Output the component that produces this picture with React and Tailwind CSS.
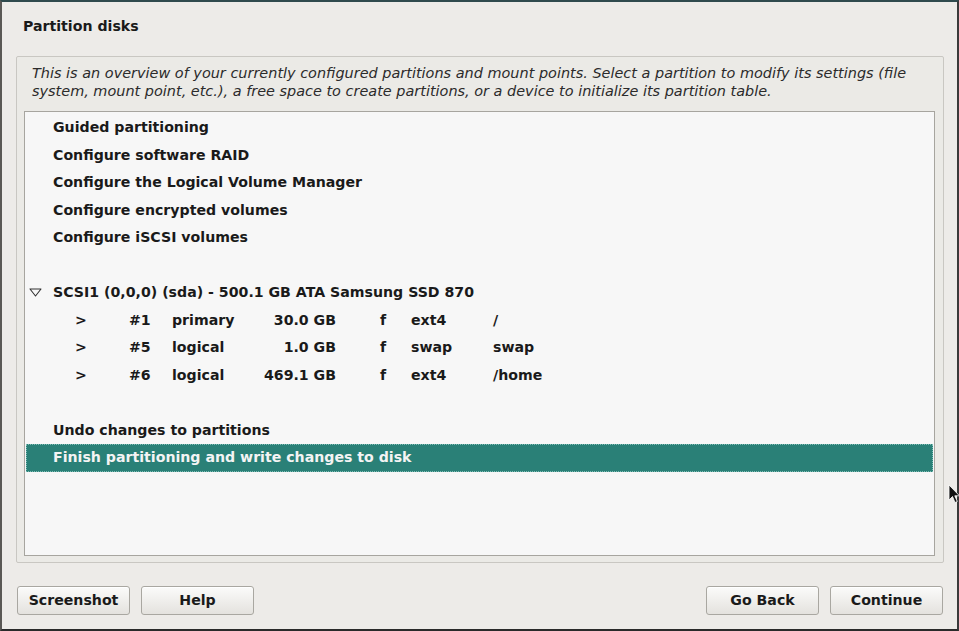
import React from "react";

const menuTop = [
  "Guided partitioning",
  "Configure software RAID",
  "Configure the Logical Volume Manager",
  "Configure encrypted volumes",
  "Configure iSCSI volumes",
];

const partitions = [
  { num: "#1", type: "primary", size: "30.0 GB", fs: "ext4", mount: "/" },
  { num: "#5", type: "logical", size: "1.0 GB", fs: "swap", mount: "swap" },
  { num: "#6", type: "logical", size: "469.1 GB", fs: "ext4", mount: "/home" },
];

const Row = ({ children, selected }) => (
  <div
    className={
      selected
        ? "flex h-[27.5px] items-center border border-dotted border-[#7fbdb5] bg-[#2a8077] pl-[26px] text-[#f4f4f4]"
        : "flex h-[27.5px] items-center border border-transparent pl-[26px] text-[#1a1a1a]"
    }
  >
    {children}
  </div>
);

const Button = ({ label, className }) => (
  <button
    className={
      "flex h-[29px] w-[113px] items-center justify-center rounded-[3px] border border-[#a9a7a1] bg-gradient-to-b from-[#fbfbfa] to-[#e4e2de] text-[14.15px] font-bold text-[#1a1a1a] shadow-[inset_0_1px_0_#ffffff] " +
      (className || "")
    }
  >
    {label}
  </button>
);

export default function App() {
  return (
    <div
      className="relative flex h-[631px] w-[959px] flex-col border-2 border-t-[#2f4a4d] border-l-[#5a5855] border-r-[#3a3a3a] border-b-[#2a2a2a] bg-[#edebe8] text-[14.15px]"
      style={{ fontFamily: '"DejaVu Sans", "Liberation Sans", sans-serif' }}
    >
      {/* title */}
      <div className="pl-[21px] pt-[14px] font-bold leading-[20px] text-[#1a1a1a]">
        Partition disks
      </div>

      {/* frame */}
      <div className="ml-[14px] mr-[13px] mt-[20px] flex h-[507px] flex-col rounded-[2px] border border-[#c9c7c2] bg-[#ebeae6] pb-[6px] pl-[7px] pr-[8px] pt-[7px]">
        <p className="pl-[8px] text-[14.45px] italic leading-[18px] text-[#2b2b2b]">
          This is an overview of your currently configured partitions and mount points. Select a partition to modify its settings (file system, mount point, etc.), a free space to create partitions, or a device to initialize its partition table.
        </p>

        <div className="mt-[11px] flex-1 border border-[#a7a59f] bg-[#f7f7f7] pl-px pr-px pt-[2px] font-bold">
          {menuTop.map((t) => (
            <Row key={t}>{t}</Row>
          ))}
          <Row />
          <div className="relative">
            <svg className="absolute left-[3px] top-[9px]" width="13" height="9" viewBox="0 0 13 9">
              <polygon points="1,1 12,1 6.5,8" fill="#f7f7f7" stroke="#333" strokeWidth="1.1" strokeLinejoin="round" />
            </svg>
            <Row>SCSI1 (0,0,0) (sda) - 500.1 GB ATA Samsung SSD 870</Row>
          </div>
          {partitions.map((p) => (
            <Row key={p.num}>
              <span className="w-[22px] shrink-0" />
              <span className="w-[54px] shrink-0">&gt;</span>
              <span className="w-[43px] shrink-0">{p.num}</span>
              <span className="w-[70px] shrink-0">{p.type}</span>
              <span className="w-[94px] shrink-0 text-right">{p.size}</span>
              <span className="ml-[44px] w-[31px] shrink-0">f</span>
              <span className="w-[82px] shrink-0">{p.fs}</span>
              <span>{p.mount}</span>
            </Row>
          ))}
          <Row />
          <Row>Undo changes to partitions</Row>
          <Row selected>Finish partitioning and write changes to disk</Row>
        </div>
      </div>

      {/* buttons */}
      <div className="mt-[23px] flex pl-[15px] pr-[14px]">
        <Button label="Screenshot" />
        <Button label="Help" className="ml-[11px]" />
        <div className="flex-1" />
        <Button label="Go Back" />
        <Button label="Continue" className="ml-[11px]" />
      </div>

      {/* mouse pointer */}
      <svg className="absolute left-[946px] top-[482px]" width="12" height="20" viewBox="0 0 12 20">
        <path d="M1 1 L1 16 L4.5 12.5 L7 18.5 L9.3 17.5 L6.8 11.8 L11.5 11.8 Z" fill="#111" stroke="#fff" strokeWidth="0.8" />
      </svg>
    </div>
  );
}
